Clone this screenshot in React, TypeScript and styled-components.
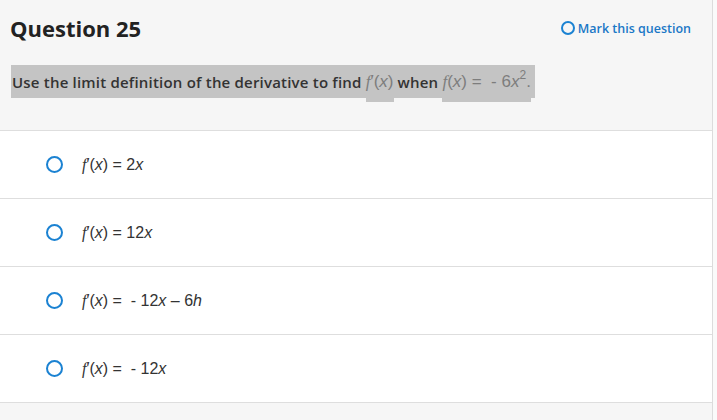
import React from "react";
import styled, { createGlobalStyle } from "styled-components";

const Global = createGlobalStyle`
  html, body { margin: 0; padding: 0; background: #fafafa; }
  body { font-family: "Open Sans", Lato, sans-serif; }
`;

const Page = styled.div`
  width: 712px;
  height: 420px;
  background: #f6f6f6;
  border-right: 1px solid #dcdcdc;
  display: flex;
  flex-direction: column;
`;

const Header = styled.header`
  height: 131px;
  box-sizing: border-box;
  padding: 14px 21px 0 10px;
  border-bottom: 1px solid #dedede;
  display: flex;
  flex-direction: column;
`;

const TitleRow = styled.div`
  display: flex;
  align-items: center;
  justify-content: space-between;
  height: 28px;
`;

const Title = styled.h1`
  margin: 0;
  font-family: "Open Sans", sans-serif;
  font-weight: 700;
  font-size: 22px;
  color: #222;
`;

const MarkLink = styled.a`
  display: flex;
  align-items: center;
  gap: 3px;
  color: #1b78c6;
  font-family: "Open Sans", sans-serif;
  font-weight: 600;
  font-size: 12.5px;
  text-decoration: none;
  cursor: pointer;
`;

const Ring = styled.span<{ size: number; stroke: number }>`
  display: inline-block;
  flex: none;
  box-sizing: border-box;
  width: ${(p) => p.size}px;
  height: ${(p) => p.size}px;
  border-radius: 50%;
  border: ${(p) => p.stroke}px solid #1b82d2;
  background: transparent;
`;

const Prompt = styled.div`
  margin-top: 23px;
  margin-left: 1px;
  align-self: flex-start;
  background: #c4c4c4;
  height: 33px;
  box-sizing: border-box;
  padding: 0 4px 0 1px;
  display: flex;
  align-items: center;
  font-family: "Open Sans", sans-serif;
  font-weight: 600;
  font-size: 15px;
  letter-spacing: 0.2px;
  color: #333;
  white-space: pre;
`;

const PromptMath = styled.span`
  align-self: flex-start;
  height: 37px;
  display: inline-flex;
  align-items: center;
  background: #c4c4c4;
  font-family: "Liberation Sans", Arial, sans-serif;
  font-weight: 400;
  font-size: 17px;
  letter-spacing: 0;
  color: #7d7d7d;
  white-space: pre;
  box-sizing: border-box;
  padding-bottom: 4px;
`;

const MathText = styled.span`
  display: inline;
`;

const FItalic = styled.span`
  font-family: "Liberation Serif", serif;
  font-style: italic;
`;

const Var = styled.span`
  font-style: italic;
`;

const Sup = styled.sup`
  font-size: 12px;
  vertical-align: 8px;
  line-height: 0;
`;

const Options = styled.div`
  display: flex;
  flex-direction: column;
  background: #fff;
`;

const OptionRow = styled.label`
  height: 68px;
  box-sizing: border-box;
  border-bottom: 1px solid #dedede;
  display: flex;
  align-items: center;
  padding-left: 46px;
  gap: 19px;
  cursor: pointer;
`;

const OptionMath = styled.span`
  font-family: "Liberation Sans", Arial, sans-serif;
  font-size: 16px;
  color: #333;
  white-space: pre;
  padding-top: 1px;
`;

const Fp = () => (
  <>
    <FItalic>f</FItalic>′(<Var>x</Var>)
  </>
);

const options: React.ReactNode[] = [
  <>
    <Fp /> = 2<Var>x</Var>
  </>,
  <>
    <Fp /> = 12<Var>x</Var>
  </>,
  <>
    <Fp /> =  - 12<Var>x</Var> – 6<Var>h</Var>
  </>,
  <>
    <Fp /> =  - 12<Var>x</Var>
  </>,
];

export default function App() {
  return (
    <>
      <Global />
      <Page>
        <Header>
          <TitleRow>
            <Title>Question 25</Title>
            <MarkLink>
              <Ring size={14} stroke={2} />
              Mark this question
            </MarkLink>
          </TitleRow>
          <Prompt>
            {"Use the limit definition of the derivative to find "}
            <PromptMath>
              <MathText>
                <Fp />
              </MathText>
            </PromptMath>
            {" when "}
            <PromptMath>
              <MathText>
                <FItalic>f</FItalic>(<Var>x</Var>) =  - 6<Var>x</Var>
                <Sup>2</Sup>.
              </MathText>
            </PromptMath>
          </Prompt>
        </Header>
        <Options>
          {options.map((o, i) => (
            <OptionRow key={i}>
              <Ring size={17} stroke={2} />
              <OptionMath>{o}</OptionMath>
            </OptionRow>
          ))}
        </Options>
      </Page>
    </>
  );
}
